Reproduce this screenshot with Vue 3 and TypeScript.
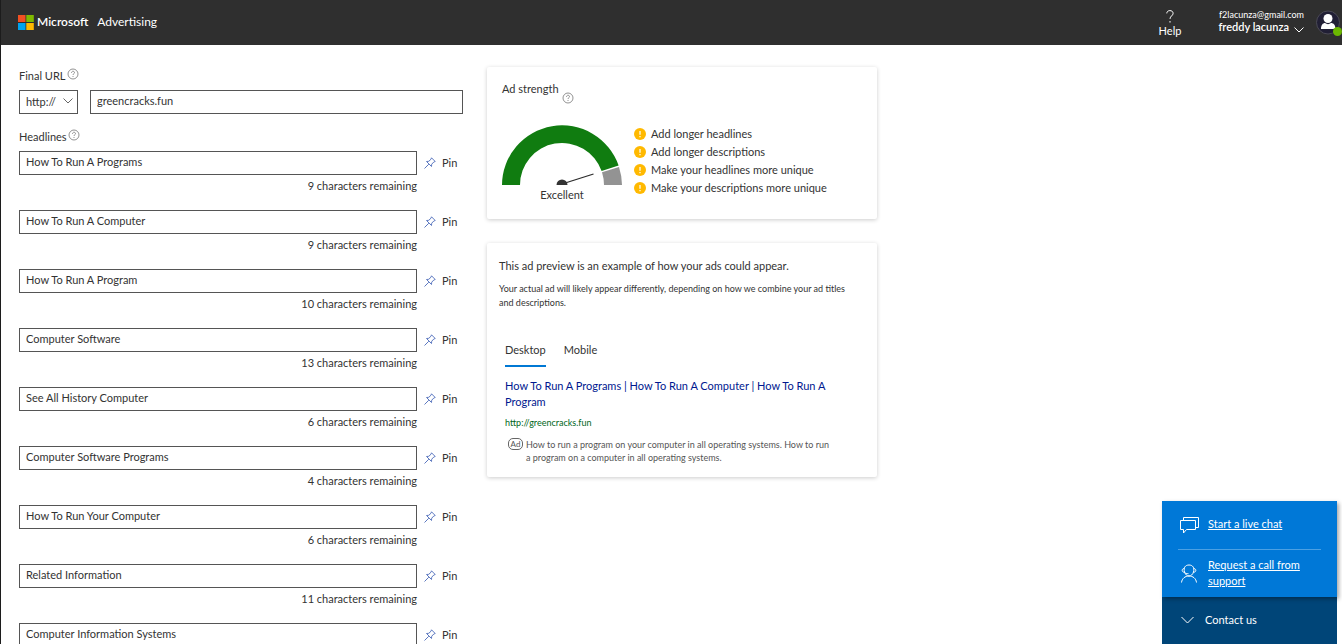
<script setup lang="ts">
import { reactive, ref } from 'vue'

interface Headline {
  text: string
  remaining?: number
}

const protocol = ref('http://')
const finalUrl = ref('greencracks.fun')
const device = ref('Desktop')
const devices = ['Desktop', 'Mobile']

const headlines = reactive<Headline[]>([
  { text: 'How To Run A Programs', remaining: 9 },
  { text: 'How To Run A Computer', remaining: 9 },
  { text: 'How To Run A Program', remaining: 10 },
  { text: 'Computer Software', remaining: 13 },
  { text: 'See All History Computer', remaining: 6 },
  { text: 'Computer Software Programs', remaining: 4 },
  { text: 'How To Run Your Computer', remaining: 6 },
  { text: 'Related Information', remaining: 11 },
  { text: 'Computer Information Systems' },
])

const tips = [
  'Add longer headlines',
  'Add longer descriptions',
  'Make your headlines more unique',
  'Make your descriptions more unique',
]
</script>

<template>
  <div class="page">
    <header class="topbar">
      <a class="brand" href="#">
        <svg class="logo" viewBox="0 0 16 15" aria-hidden="true">
          <rect width="7.5" height="7" fill="#f25022" />
          <rect x="8.3" width="7.5" height="7" fill="#7fba00" />
          <rect y="8" width="7.5" height="7" fill="#00a4ef" />
          <rect x="8.3" y="8" width="7.5" height="7" fill="#ffb900" />
        </svg>
        <span class="company">Microsoft</span>
        <span class="product">Advertising</span>
      </a>
      <div class="account">
        <button class="help" type="button">
          <svg viewBox="0 0 8 13" aria-hidden="true">
            <path d="M.8 3.4C.8 1.6 2.1.6 3.9.6s3.2 1 3.2 2.7c0 2.5-3.1 2.7-3.1 5.6" />
            <path d="M4 11v1.6" />
          </svg>
          <span>Help</span>
        </button>
        <button class="user" type="button">
          <span class="email">f2lacunza@gmail.com</span>
          <span class="name">freddy lacunza
            <svg viewBox="0 0 10 6" aria-hidden="true"><path d="M.5.5 5 5 9.500.5" /></svg>
          </span>
        </button>
        <button class="avatar" type="button" aria-label="Account">
          <svg viewBox="0 0 26 26" aria-hidden="true">
            <circle cx="12" cy="12.500" r="11.500" fill="#211f35" stroke="#4b4a55" />
            <circle cx="12" cy="8.500" r="4.500" fill="#fff" />
            <path d="M5 19c0-4 2-6 4-6 2 1.500 4 1.500 6 0 2.500 0 4.500 2 4.500 6z" fill="#fff" />
            <circle cx="21.500" cy="21.500" r="4.500" fill="#6bb700" />
          </svg>
        </button>
      </div>
    </header>

    <main class="content">
      <form class="editor" @submit.prevent>
        <div class="label">
          <label for="url">Final URL</label>
          <svg class="hint" viewBox="0 0 12 12" aria-hidden="true">
            <circle cx="6" cy="6" r="5" /><path d="M4.500 4.800c0-2 3-2 3-.2C7.500 5.800 6 5.700 6 7M6 8v1" />
          </svg>
        </div>
        <div class="url-row">
          <div class="protocol">
            <select v-model="protocol" aria-label="Protocol">
              <option>http://</option>
              <option>https://</option>
            </select>
            <svg viewBox="0 0 10 6" aria-hidden="true"><path d="M.5.5 5 5 9.500.5" /></svg>
          </div>
          <input id="url" v-model="finalUrl" type="text" />
        </div>

        <div class="label headlines-label">
          <span id="headlines">Headlines</span>
          <svg class="hint" viewBox="0 0 12 12" aria-hidden="true">
            <circle cx="6" cy="6" r="5" /><path d="M4.500 4.800c0-2 3-2 3-.2C7.500 5.800 6 5.700 6 7M6 8v1" />
          </svg>
        </div>
        <div v-for="(h, i) in headlines" :key="i" class="headline">
          <div class="field">
            <input v-model="h.text" type="text" aria-labelledby="headlines" />
            <p v-if="h.remaining !== undefined">{{ h.remaining }} characters remaining</p>
          </div>
          <button class="pin" type="button">
            <svg viewBox="0 0 12 12" aria-hidden="true">
              <path d="M7.500.8 11.200 4.500 9.800 5 7.700 7.200 7.500 9.500 2.500 4.500 4.800 4.300 7 2.200zM4.800 7.200.5 11.500" />
            </svg>
            Pin
          </button>
        </div>
      </form>

      <div class="side">
        <section class="card strength">
          <h2>
            Ad strength
            <svg class="hint" viewBox="0 0 12 12" aria-hidden="true">
              <circle cx="6" cy="6" r="5" /><path d="M4.500 4.800c0-2 3-2 3-.2C7.500 5.800 6 5.700 6 7M6 8v1" />
            </svg>
          </h2>
          <div class="strength-body">
            <div class="gauge">
              <svg viewBox="0 0 120 60" aria-hidden="true">
                <path d="M0 60A60 60 0 0 1 116.600 40.400L99.600 46A42 42 0 0 0 18 60z" fill="#107c10" />
                <path d="M117 42A60 60 0 0 1 120 60H102A42 42 0 0 0 100 47.200z" fill="#939393" />
                <path d="M60 59 91.500 49" stroke="#2b2b2b" stroke-width="1.300" />
                <path d="M54.500 60a5.500 5.500 0 0 1 11 0z" fill="#333" />
              </svg>
              <span>Excellent</span>
            </div>
            <ul>
              <li v-for="tip in tips" :key="tip">
                <svg viewBox="0 0 12 12" aria-hidden="true">
                  <circle cx="6" cy="6" r="6" fill="#ffb900" />
                  <path d="M6 3v3.800M6 8v1.300" stroke="#fff" stroke-width="1.200" />
                </svg>
                {{ tip }}
              </li>
            </ul>
          </div>
        </section>

        <section class="card preview">
          <p class="intro">This ad preview is an example of how your ads could appear.</p>
          <p class="note">Your actual ad will likely appear differently, depending on how we combine your ad titles and descriptions.</p>
          <div class="tabs" role="tablist">
            <button
              v-for="d in devices"
              :key="d"
              type="button"
              role="tab"
              :aria-selected="device === d"
              :class="{ active: device === d }"
              @click="device = d"
            >{{ d }}</button>
          </div>
          <div class="ad">
            <a class="title" href="#">How To Run A Programs | How To Run A Computer | How To Run A Program</a>
            <cite>http://greencracks.fun</cite>
            <div class="description">
              <span class="badge">Ad</span>
              <p>How to run a program on your computer in all operating systems. How to run a program on a computer in all operating systems.</p>
            </div>
          </div>
        </section>
      </div>
    </main>

    <aside class="contact">
      <div class="options">
        <div class="option">
          <svg viewBox="0 0 19 17" aria-hidden="true">
            <path d="M3.500 3.500V.5h15v10h-3M.5 3.500h15v9H6.500L3.500 16v-3.500h-3z" />
          </svg>
          <a href="#">Start a live chat</a>
        </div>
        <div class="option call">
          <svg viewBox="0 0 19 19" aria-hidden="true">
            <path d="M1.500 18.500c.5-4 3.500-6.500 7.500-6.500s7 2.500 7.500 6.500" />
            <path d="M4.500 8C3.200 3.500 5.500 1 9 1s5.800 2.500 4.500 7c-.8 2.500-2.500 4-4.500 4S5.300 10.500 4.500 8" />
            <path d="M4 4.500C1.500 4.800 1.500 8.200 4.500 8.300M14 4.500c2.500.3 2.500 3.700-.5 3.800M4.500 8.500c1 1 2 1.200 4 1.200" />
          </svg>
          <a href="#">Request a call from support</a>
        </div>
      </div>
      <button class="toggle" type="button">
        <svg viewBox="0 0 13 8" aria-hidden="true"><path d="M.5 1 6.500 7l6-6" /></svg>
        Contact us
      </button>
    </aside>
  </div>
</template>

<style>
body {
  margin: 0;
}
</style>

<style scoped>
* {
  box-sizing: border-box;
}

.page {
  height: 100vh;
  overflow: hidden;
  border-left: 1px solid #1c1c1c;
  background: #fff;
  color: #333;
  font: 11px/16px Lato, "Open Sans", sans-serif;
}

button,
input,
select {
  margin: 0;
  padding: 0;
  border: 0;
  border-radius: 0;
  background: none;
  color: inherit;
  font: inherit;
}

p,
h2,
ul {
  margin: 0;
  padding: 0;
  font: inherit;
  list-style: none;
}

svg {
  display: block;
  flex: none;
  fill: none;
}

.topbar {
  display: flex;
  align-items: center;
  justify-content: space-between;
  height: 45px;
  padding-left: 17px;
  background: #2f2f2f;
  color: #fff;
}

.brand {
  display: flex;
  align-items: center;
  color: #fff;
  font-size: 12px;
  text-decoration: none;
}

.logo {
  width: 16px;
  height: 15px;
}

.company {
  margin: 0 9px 0 3px;
  font-weight: 600;
}

.company,
.product {
  padding-bottom: 2px;
}

.account {
  display: flex;
  align-items: center;
}

.help {
  display: flex;
  flex-direction: column;
  align-items: center;
  margin-right: 37px;
  padding-top: 4px;
}

.help svg {
  width: 8px;
  height: 13px;
  stroke: #fff;
}

.user {
  display: flex;
  flex-direction: column;
  align-items: flex-end;
  margin-right: 12px;
  padding-bottom: 3px;
  font-size: 9px;
  line-height: 12px;
}

.name {
  display: flex;
  gap: 5px;
  font-size: 11px;
  font-weight: 600;
}

.name svg {
  align-self: flex-end;
  width: 10px;
  height: 6px;
  stroke: #fff;
}

.avatar svg {
  width: 26px;
  height: 26px;
}

.content {
  display: flex;
  align-items: flex-start;
  gap: 24px;
  padding: 22px 18px 0;
}

.editor {
  width: 444px;
}

.label {
  display: flex;
  gap: 1px;
  line-height: 18px;
}

.hint {
  width: 12px;
  height: 12px;
  stroke: #767676;
  stroke-width: 0.8;
}

.label .hint {
  margin-top: 1px;
}

.url-row {
  display: flex;
  gap: 12px;
  margin-top: 5px;
}

input,
select {
  width: 100%;
  height: 24px;
  padding: 0 6px 4px;
  border: 1px solid #555;
  background: #fff;
}

.protocol {
  position: relative;
  flex: none;
  width: 59px;
}

select {
  appearance: none;
  padding-bottom: 0;
}

.protocol svg {
  position: absolute;
  top: 8px;
  right: 5px;
  width: 10px;
  height: 6px;
  stroke: #666;
  pointer-events: none;
}

.headlines-label {
  margin: 14px 0 5px;
}

.headline {
  display: flex;
  gap: 7px;
  height: 59px;
}

.field {
  width: 398px;
}

.field p {
  margin-top: 3px;
  text-align: right;
}

.pin {
  display: flex;
  align-items: center;
  gap: 6px;
  height: 24px;
}

.pin svg {
  width: 12px;
  height: 12px;
  stroke: #5c78c0;
}

.side {
  display: grid;
  gap: 24px;
  width: 390px;
}

.card {
  border-radius: 2px;
  background: #fff;
  box-shadow: 0 1px 4px rgba(0, 0, 0, 0.2);
}

.strength {
  height: 152px;
  padding: 14px 15px 0;
}

.strength h2 {
  display: flex;
  gap: 3px;
}

.strength .hint {
  margin-top: 11px;
}

.strength-body {
  display: flex;
  gap: 12px;
  margin-top: 21px;
}

.gauge {
  width: 120px;
  text-align: center;
}

.gauge svg {
  width: 120px;
  height: 60px;
  margin-bottom: 2px;
}

.strength-body li {
  display: flex;
  align-items: center;
  gap: 5px;
  line-height: 18px;
}

.strength-body li svg {
  width: 12px;
  height: 12px;
}

.preview {
  height: 234px;
  padding: 15px 12px 0;
}

.note {
  margin-top: 8px;
  padding-right: 12px;
  font-size: 9px;
  line-height: 14px;
}

.tabs {
  display: flex;
  gap: 18px;
  margin: 31px 6px 0;
}

.tabs button {
  height: 26px;
  padding-bottom: 6px;
  border-bottom: 2px solid transparent;
}

.tabs .active {
  border-color: #0078d4;
}

.ad {
  margin: 11px 36px 0 6px;
}

.title {
  display: block;
  color: #00188f;
  text-decoration: none;
}

cite {
  display: block;
  margin-top: 5px;
  color: #006621;
  font-size: 9px;
  font-style: normal;
}

.description {
  display: flex;
  gap: 3px;
  margin: 7px 0 0 3px;
  color: #555;
  font-size: 9px;
  line-height: 13px;
}

.badge {
  flex: none;
  width: 15px;
  height: 12px;
  border: 1px solid #666;
  border-radius: 5px;
  font-size: 8px;
  line-height: 10px;
  text-align: center;
}

.contact {
  position: fixed;
  right: 5px;
  bottom: 0;
  width: 175px;
  background: #004578;
  color: #fff;
}

.options {
  padding: 0 16px;
  background: #0078d7;
  box-shadow: 2px 2px 4px rgba(0, 0, 0, 0.35);
}

.option {
  display: flex;
  align-items: center;
  gap: 9px;
  height: 48px;
  padding-left: 2px;
}

.option svg {
  width: 19px;
  height: 17px;
  stroke: #fff;
}

.option a {
  padding-bottom: 2px;
  color: #fff;
}

.call {
  border-top: 1px solid #4ba0e3;
}

.call svg {
  height: 19px;
}

.toggle {
  display: flex;
  align-items: center;
  gap: 11px;
  width: 100%;
  height: 47px;
  padding: 0 0 2px 19px;
}

.toggle svg {
  width: 13px;
  height: 8px;
  stroke: #fff;
}
</style>
